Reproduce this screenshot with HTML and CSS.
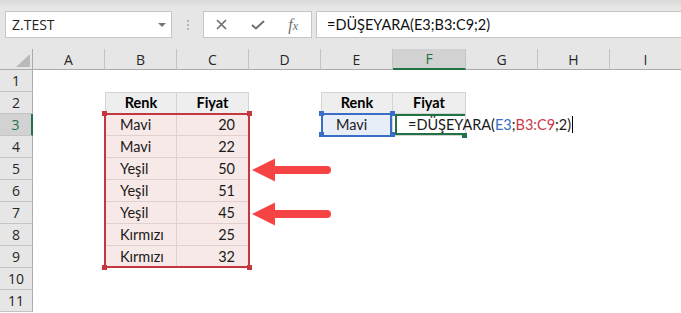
FILE: index.html
```html
<!DOCTYPE html>
<html lang="tr">
<head>
    <meta charset="UTF-8">
    <meta name="viewport" content="width=device-width, initial-scale=1.0">
    <title>DÜŞEYARA</title>
    <link rel="stylesheet" href="styles.css">
</head>
<body>
    <div class="toolbar">
        <div class="namebox">Z.TEST<span class="caret"></span></div>
        <div class="grip"><span></span><span></span><span></span></div>
        <div class="fxbox">
            <div class="btn">
                <svg width="11" height="11" viewBox="0 0 11 11"><path d="M1 1L10 10M10 1L1 10" stroke="#6f6f6f" stroke-width="1.7" fill="none"/></svg>
            </div>
            <div class="btn">
                <svg width="14" height="10" viewBox="0 0 14 10"><path d="M1 5L5 8.5L13 1" stroke="#6f6f6f" stroke-width="2" fill="none"/></svg>
            </div>
            <div class="btn"><span class="fx">f<i>x</i></span></div>
        </div>
        <div class="formula">=DÜŞEYARA(E3;B3:C9;2)</div>
    </div>

    <div class="sheet">
        <div class="corner"><div class="tri"></div></div>
        <div class="colhead">A</div>
        <div class="colhead">B</div>
        <div class="colhead">C</div>
        <div class="colhead">D</div>
        <div class="colhead">E</div>
        <div class="colhead sel">F</div>
        <div class="colhead">G</div>
        <div class="colhead">H</div>
        <div class="colhead">I</div>

        <div class="rowhead">1</div>
        <div class="rowhead">2</div>
        <div class="rowhead sel">3</div>
        <div class="rowhead">4</div>
        <div class="rowhead">5</div>
        <div class="rowhead">6</div>
        <div class="rowhead">7</div>
        <div class="rowhead">8</div>
        <div class="rowhead">9</div>
        <div class="rowhead">10</div>
        <div class="rowhead">11</div>

        <!-- B2:C9 -->
        <div class="range prices">
            <div class="cell th first">Renk</div>
            <div class="cell th">Fiyat</div>
            <div class="body red">
                <div class="cell txt first">Mavi</div><div class="cell num">20</div>
                <div class="cell txt first">Mavi</div><div class="cell num">22</div>
                <div class="cell txt first">Yeşil</div><div class="cell num">50</div>
                <div class="cell txt first">Yeşil</div><div class="cell num">51</div>
                <div class="cell txt first">Yeşil</div><div class="cell num">45</div>
                <div class="cell txt first">Kırmızı</div><div class="cell num">25</div>
                <div class="cell txt first">Kırmızı</div><div class="cell num">32</div>
                <span class="handle tl"></span><span class="handle tr"></span>
                <span class="handle bl"></span><span class="handle br"></span>
            </div>
        </div>

        <!-- E2:F3 -->
        <div class="range lookup">
            <div class="cell th first">Renk</div>
            <div class="cell th">Fiyat</div>
            <div class="cell txt first active">
                Mavi
                <span class="handle tl"></span><span class="handle tr"></span>
                <span class="handle bl"></span><span class="handle br"></span>
            </div>
            <div class="cell edit">
                =DÜŞEYARA(<span class="ref-blue">E3</span>;<span class="ref-red">B3:C9</span>;2)<span class="cursor"></span>
                <span class="handle br"></span>
            </div>
        </div>

        <svg class="arrows" width="84" height="76" viewBox="0 0 84 76">
            <polygon points="2,15 25,3.5 25,26.5" fill="#f64343"/>
            <line x1="24" y1="15" x2="77" y2="15" stroke="#f64343" stroke-width="8" stroke-linecap="round"/>
            <polygon points="2,59 25,47.5 25,70.5" fill="#f64343"/>
            <line x1="24" y1="59" x2="77" y2="59" stroke="#f64343" stroke-width="8" stroke-linecap="round"/>
        </svg>
    </div>
</body>
</html>
```

FILE: styles.css
```css
body {
    margin: 0;
    width: 681px;
    height: 313px;
    overflow: hidden;
    background: #fff;
    font-family: Lato, "Liberation Sans", sans-serif;
    color: #111;
}

/* formula bar */
.toolbar {
    display: flex;
    align-items: flex-start;
    height: 49px;
    box-sizing: border-box;
    padding: 11px 0 0 5px;
    background: linear-gradient(#dadada, #e6e6e6 7px);
}

.namebox {
    width: 167px;
    height: 27px;
    box-sizing: border-box;
    border: 1px solid #c6c6c6;
    background: #fff;
    display: flex;
    align-items: center;
    padding-left: 6px;
    font-family: "Open Sans", sans-serif;
    font-size: 14px;
    color: #262626;
}

.caret {
    margin-left: auto;
    margin-right: 5px;
    border-left: 4px solid transparent;
    border-right: 4px solid transparent;
    border-top: 4px solid #777;
}

.grip {
    width: 31px;
    display: flex;
    flex-direction: column;
    align-items: center;
    gap: 2px;
    padding-top: 9px;
}

.grip span {
    width: 2px;
    height: 2px;
    background: #b4b4b4;
}

.fxbox {
    width: 109px;
    height: 27px;
    box-sizing: border-box;
    border: 1px solid #c6c6c6;
    background: #fff;
    display: flex;
}

.btn {
    flex: 1;
    display: flex;
    align-items: center;
    justify-content: center;
}

.fx {
    font-family: "Liberation Serif", serif;
    font-style: italic;
    font-size: 16px;
    color: #6f6f6f;
}

.fx i {
    font-size: 12px;
}

.formula {
    flex: 1;
    height: 27px;
    box-sizing: border-box;
    margin-left: 4px;
    border: 1px solid #c6c6c6;
    border-right: none;
    background: #fff;
    padding-left: 10px;
    font-size: 14.5px;
    line-height: 25px;
}

/* sheet */
.sheet {
    position: relative;
    display: grid;
    grid-template-columns: 33px repeat(5, 72px) 73px repeat(3, 72px);
    grid-template-rows: 21px;
    grid-auto-rows: 22px;
}

.corner,
.colhead,
.rowhead {
    box-sizing: border-box;
    background: #e6e6e6;
    font-family: "Open Sans", sans-serif;
    font-size: 14px;
    color: #262626;
    display: flex;
    align-items: center;
    justify-content: center;
}

.corner {
    justify-content: flex-end;
    align-items: flex-end;
    padding: 0 2px 2px 0;
    border-right: 1px solid #ababab;
    border-bottom: 1px solid #ababab;
}

.tri {
    width: 14px;
    height: 13px;
    background: #b9b9b9;
    clip-path: polygon(100% 0, 100% 100%, 0 100%);
}

.colhead {
    border-right: 1px solid #c4c4c4;
    border-bottom: 1px solid #ababab;
}

.colhead.sel {
    background: #d2d2d2;
    border-bottom: 2px solid #217346;
    color: #217346;
}

.rowhead {
    grid-column: 1;
    border-right: 1px solid #ababab;
    border-bottom: 1px solid #c4c4c4;
}

.rowhead.sel {
    background: #d2d2d2;
    border-right: 2px solid #217346;
    color: #217346;
}

/* data ranges */
.range {
    display: grid;
    grid-auto-rows: 22px;
}

.prices {
    grid-column: 3 / span 2;
    grid-row: 3 / span 8;
    grid-template-columns: 72px 72px;
}

.lookup {
    grid-column: 6 / span 2;
    grid-row: 3 / span 2;
    grid-template-columns: 72px 73px;
}

.cell {
    box-sizing: border-box;
    border-right: 1px solid #d4d4d4;
    border-bottom: 1px solid #d4d4d4;
    font-size: 14.5px;
    line-height: 21px;
    white-space: nowrap;
    color: #1a1a1a;
}

.cell.first {
    border-left: 1px solid #d4d4d4;
}

.th {
    background: #eeeeee;
    border-top: 1px solid #d4d4d4;
    font-weight: bold;
    text-align: center;
    line-height: 20px;
    color: #000;
}

.txt {
    padding-left: 14px;
}

.num {
    text-align: right;
    padding-right: 13px;
}

.body {
    grid-column: 1 / span 2;
    grid-row: 2 / span 7;
    display: grid;
    grid-template-columns: 72px 72px;
    grid-auto-rows: 22px;
    position: relative;
}

.body .cell {
    background: #f8e9e9;
    border-color: #e0d0d0;
}

.body::after {
    content: "";
    position: absolute;
    inset: -1px -1px 0 -1px;
    border: 2px solid #c3383f;
    pointer-events: none;
}

.handle {
    position: absolute;
    width: 5px;
    height: 5px;
    z-index: 2;
}

.red .handle {
    background: #c3383f;
}

.tl { left: -3px; top: -3px; }
.tr { right: -3px; top: -3px; }
.bl { left: -3px; bottom: -2px; }
.br { right: -3px; bottom: -2px; }

.active {
    position: relative;
    background: #e8eef8;
}

.active::after {
    content: "";
    position: absolute;
    inset: -1px 0 -2px -1px;
    border: 2px solid #3a6ec6;
}

.active .handle {
    background: #3a6ec6;
}

.edit {
    position: relative;
    overflow: visible;
    padding-left: 15px;
    background: #fff;
    z-index: 1;
}

.edit::after {
    content: "";
    position: absolute;
    top: 0;
    bottom: 0;
    left: 2px;
    right: 0;
    border: 2px solid #217346;
    border-right: none;
}

.edit .handle {
    background: #217346;
    right: -2px;
    bottom: -3px;
}

.ref-blue {
    color: #3a6ec6;
}

.ref-red {
    color: #d0384a;
}

.cursor {
    display: inline-block;
    width: 1px;
    height: 17px;
    background: #000;
    vertical-align: -3px;
    margin-left: 1px;
}

.arrows {
    position: absolute;
    left: 250px;
    top: 106px;
}
```
